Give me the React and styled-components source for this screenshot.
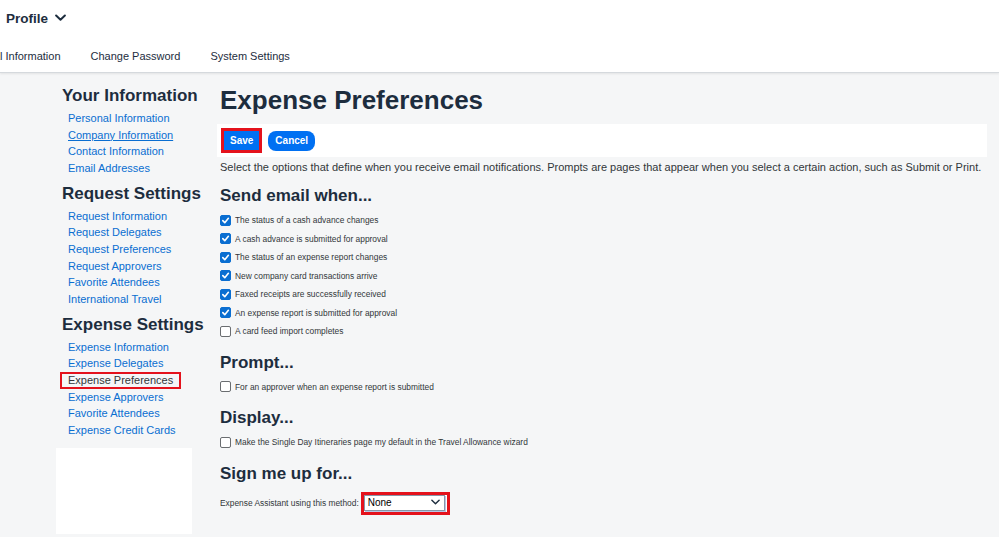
import React from "react";
import styled, { createGlobalStyle } from "styled-components";

const Global = createGlobalStyle`
  html, body { margin: 0; padding: 0; }
  body {
    background: #f5f6f7;
    font-family: "Liberation Sans", Arial, sans-serif;
    color: #32363a;
    width: 999px;
    height: 537px;
    overflow: hidden;
  }
`;

const Header = styled.header`
  background: #fff;
  height: 72px;
  border-bottom: 1px solid #d5d9dd;
  box-shadow: 0 1px 2px rgba(0,0,0,0.08);
`;

const TitleRow = styled.div`
  height: 36px;
  display: flex;
  align-items: center;
  padding-left: 6px;
  gap: 7px;
  font-size: 13.5px;
  font-weight: 700;
  color: #1d2d3e;
`;

const Tabs = styled.nav`
  height: 36px;
  box-sizing: border-box;
  padding-top: 4px;
  display: flex;
  align-items: center;
  gap: 30px;
  overflow: hidden;
  white-space: nowrap;
`;

const Tab = styled.span`
  font-size: 11px;
  color: #1d2d3e;
  margin-left: ${(p) => p.$offset || 0}px;
`;

const Body = styled.div`
  display: flex;
  padding-left: 56px;
`;

const Sidebar = styled.aside`
  width: 136px;
  padding-top: 12px;
  display: flex;
  flex-direction: column;
`;

const Section = styled.div`
  display: flex;
  flex-direction: column;
  & + & { margin-top: 6px; }
`;

const SideHeading = styled.h2`
  margin: 0 0 3px 6px;
  font-size: 17px;
  line-height: 22px;
  font-weight: 700;
  color: #1d2d3e;
  white-space: nowrap;
`;

const SideLink = styled.a`
  margin-left: 12px;
  font-size: 11px;
  line-height: 16.65px;
  color: ${(p) => (p.$current ? "#32363a" : "#0a6ed1")};
  text-decoration: ${(p) => (p.$hover ? "underline" : "none")};
  white-space: nowrap;
  align-self: flex-start;
  ${(p) =>
    p.$current &&
    `
    margin-left: 4px;
    padding: 0 6px;
    border: 2px solid #e4121c;
    line-height: 12.65px;
  `}
`;

const BlankCard = styled.div`
  margin-top: 9px;
  height: 86px;
  background: #fff;
`;

const Main = styled.main`
  margin-left: 25px;
  width: 770px;
  padding-top: 12px;
  display: flex;
  flex-direction: column;
`;

const PageTitle = styled.h1`
  margin: 0 0 9px 3px;
  font-size: 26px;
  line-height: 30px;
  font-weight: 700;
  color: #1d2d3e;
`;

const Toolbar = styled.div`
  height: 33px;
  background: #fff;
  display: flex;
  align-items: center;
  padding-left: 4px;
  gap: 6px;
`;

const Highlight = styled.div`
  border: 3px solid #e4121c;
  display: flex;
`;

const Button = styled.button`
  border: none;
  background: #0070f2;
  color: #fff;
  font-family: inherit;
  font-size: 10px;
  font-weight: 700;
  height: ${(p) => (p.$square ? 19 : 20)}px;
  padding: 0 ${(p) => (p.$square ? 6 : 7)}px;
  border-radius: ${(p) => (p.$square ? 0 : 8)}px;
  cursor: pointer;
`;

const Description = styled.p`
  margin: 2px 0 0 3px;
  font-size: 11px;
  line-height: 16px;
  white-space: nowrap;
`;

const GroupHeading = styled.h3`
  margin: ${(p) => (p.$first ? 10 : 11)}px 0 4px 3px;
  font-size: 17px;
  line-height: 22px;
  font-weight: 700;
  color: #1d2d3e;
`;

const CheckRow = styled.label`
  display: flex;
  align-items: center;
  gap: 4px;
  height: 18.5px;
  padding-left: 3px;
  font-size: 8.4px;
  color: #32363a;
  white-space: nowrap;
`;

const Box = styled.span`
  width: 11px;
  height: 11px;
  box-sizing: border-box;
  border-radius: 2px;
  display: inline-flex;
  align-items: center;
  justify-content: center;
  background: ${(p) => (p.$checked ? "#0a6ed1" : "#fff")};
  border: 1px solid ${(p) => (p.$checked ? "#0a6ed1" : "#6a6d70")};
`;

const SelectRow = styled.div`
  margin-top: 3px;
  display: flex;
  align-items: center;
  padding-left: 3px;
  gap: 2px;
  font-size: 8.4px;
  color: #32363a;
`;

const SelectFrame = styled.div`
  border: 3px solid #e4121c;
  padding: 0 2px 1px 0;
  background: #fff;
`;

const FakeSelect = styled.div`
  width: 72px;
  height: 14px;
  border: 1px solid #8796a8;
  box-shadow: inset 0 0 0 1px #fff, 1px 1px 0 #b9c6e6;
  display: flex;
  align-items: center;
  justify-content: space-between;
  padding: 0 4px 0 3px;
  box-sizing: content-box;
  font-size: 10px;
  color: #000;
`;

const Check = () => (
  <svg width="9" height="9" viewBox="0 0 10 10">
    <path d="M2 5.2 L4.2 7.4 L8.2 2.6" fill="none" stroke="#fff" strokeWidth="1.8" strokeLinecap="round" strokeLinejoin="round" />
  </svg>
);

const Chevron = ({ w = 11, sw = 2 }) => (
  <svg width={w} height={w * 0.7} viewBox="0 0 10 7">
    <path d="M1 1.3 L5 5.2 L9 1.3" fill="none" stroke="#1d2d3e" strokeWidth={sw} strokeLinecap="round" strokeLinejoin="round" />
  </svg>
);

const Item = ({ checked, children }) => (
  <CheckRow>
    <Box $checked={checked}>{checked && <Check />}</Box>
    {children}
  </CheckRow>
);

const emailItems = [
  ["The status of a cash advance changes", true],
  ["A cash advance is submitted for approval", true],
  ["The status of an expense report changes", true],
  ["New company card transactions arrive", true],
  ["Faxed receipts are successfully received", true],
  ["An expense report is submitted for approval", true],
  ["A card feed import completes", false],
];

export default function App() {
  return (
    <>
      <Global />
      <Header>
        <TitleRow>
          Profile
          <Chevron w={11} sw={1.8} />
        </TitleRow>
        <Tabs>
          <Tab $offset={-41}>Personal Information</Tab>
          <Tab>Change Password</Tab>
          <Tab>System Settings</Tab>
        </Tabs>
      </Header>
      <Body>
        <Sidebar>
          <Section>
            <SideHeading>Your Information</SideHeading>
            <SideLink>Personal Information</SideLink>
            <SideLink $hover>Company Information</SideLink>
            <SideLink>Contact Information</SideLink>
            <SideLink>Email Addresses</SideLink>
          </Section>
          <Section>
            <SideHeading>Request Settings</SideHeading>
            <SideLink>Request Information</SideLink>
            <SideLink>Request Delegates</SideLink>
            <SideLink>Request Preferences</SideLink>
            <SideLink>Request Approvers</SideLink>
            <SideLink>Favorite Attendees</SideLink>
            <SideLink>International Travel</SideLink>
          </Section>
          <Section>
            <SideHeading>Expense Settings</SideHeading>
            <SideLink>Expense Information</SideLink>
            <SideLink>Expense Delegates</SideLink>
            <SideLink $current>Expense Preferences</SideLink>
            <SideLink>Expense Approvers</SideLink>
            <SideLink>Favorite Attendees</SideLink>
            <SideLink>Expense Credit Cards</SideLink>
          </Section>
          <BlankCard />
        </Sidebar>
        <Main>
          <PageTitle>Expense Preferences</PageTitle>
          <Toolbar>
            <Highlight>
              <Button $square>Save</Button>
            </Highlight>
            <Button>Cancel</Button>
          </Toolbar>
          <Description>
            Select the options that define when you receive email notifications. Prompts are pages that appear when you select a certain action, such as Submit or Print.
          </Description>
          <GroupHeading $first>Send email when...</GroupHeading>
          {emailItems.map(([t, c]) => (
            <Item key={t} checked={c}>{t}</Item>
          ))}
          <GroupHeading>Prompt...</GroupHeading>
          <Item>For an approver when an expense report is submitted</Item>
          <GroupHeading>Display...</GroupHeading>
          <Item>Make the Single Day Itineraries page my default in the Travel Allowance wizard</Item>
          <GroupHeading>Sign me up for...</GroupHeading>
          <SelectRow>
            Expense Assistant using this method:
            <SelectFrame>
              <FakeSelect>
                None
                <Chevron w={9} sw={1.6} />
              </FakeSelect>
            </SelectFrame>
          </SelectRow>
        </Main>
      </Body>
    </>
  );
}
